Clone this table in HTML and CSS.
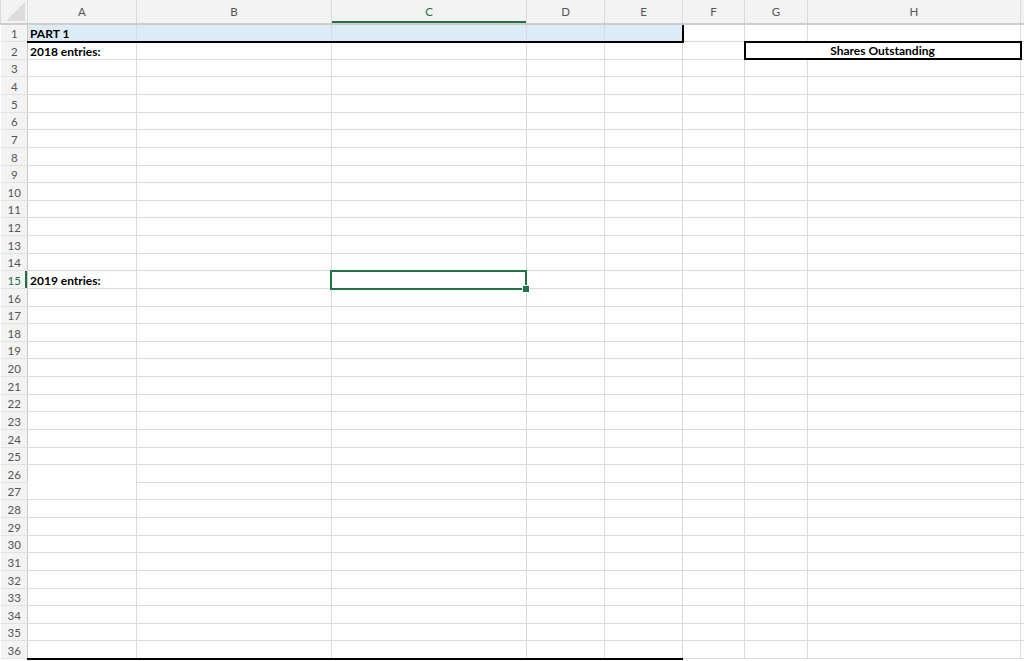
FILE: index.html
```html
<!DOCTYPE html>
<html lang="en">
<head>
  <meta charset="UTF-8" />
  <title>Sheet1</title>
  <link rel="stylesheet" href="styles.css">
</head>
<body>

  <table class="sheet">
    <colgroup>
      <col class="w-head">
      <col class="w-a">
      <col class="w-b">
      <col class="w-c">
      <col class="w-d">
      <col class="w-e">
      <col class="w-f">
      <col class="w-g">
      <col class="w-h">
      <col class="w-i">
    </colgroup>
    <thead>
      <tr>
        <th class="corner"><span class="corner-tri"></span></th>
        <th>A</th><th>B</th><th class="active">C</th><th>D</th><th>E</th><th>F</th><th>G</th><th>H</th><th></th>
      </tr>
    </thead>
    <tbody>
      <tr><th>1</th><td class="part">PART 1</td><td class="part"></td><td class="part"></td><td class="part"></td><td class="part part-end"></td><td></td><td></td><td></td><td></td></tr>
      <tr><th>2</th><td class="bold">2018 entries:</td><td></td><td></td><td></td><td></td><td></td><td class="boxed" colspan="2">Shares Outstanding</td><td></td></tr>
      <tr><th>3</th><td></td><td></td><td></td><td></td><td></td><td></td><td></td><td></td><td></td></tr>
      <tr><th>4</th><td></td><td></td><td></td><td></td><td></td><td></td><td></td><td></td><td></td></tr>
      <tr><th>5</th><td></td><td></td><td></td><td></td><td></td><td></td><td></td><td></td><td></td></tr>
      <tr><th>6</th><td></td><td></td><td></td><td></td><td></td><td></td><td></td><td></td><td></td></tr>
      <tr><th>7</th><td></td><td></td><td></td><td></td><td></td><td></td><td></td><td></td><td></td></tr>
      <tr><th>8</th><td></td><td></td><td></td><td></td><td></td><td></td><td></td><td></td><td></td></tr>
      <tr><th>9</th><td></td><td></td><td></td><td></td><td></td><td></td><td></td><td></td><td></td></tr>
      <tr><th>10</th><td></td><td></td><td></td><td></td><td></td><td></td><td></td><td></td><td></td></tr>
      <tr><th>11</th><td></td><td></td><td></td><td></td><td></td><td></td><td></td><td></td><td></td></tr>
      <tr><th>12</th><td></td><td></td><td></td><td></td><td></td><td></td><td></td><td></td><td></td></tr>
      <tr><th>13</th><td></td><td></td><td></td><td></td><td></td><td></td><td></td><td></td><td></td></tr>
      <tr><th>14</th><td></td><td></td><td></td><td></td><td></td><td></td><td></td><td></td><td></td></tr>
      <tr><th class="active">15</th><td class="bold">2019 entries:</td><td></td><td class="sel"><div class="sel-box"><span class="handle"></span></div></td><td></td><td></td><td></td><td></td><td></td><td></td></tr>
      <tr><th>16</th><td></td><td></td><td></td><td></td><td></td><td></td><td></td><td></td><td></td></tr>
      <tr><th>17</th><td></td><td></td><td></td><td></td><td></td><td></td><td></td><td></td><td></td></tr>
      <tr><th>18</th><td></td><td></td><td></td><td></td><td></td><td></td><td></td><td></td><td></td></tr>
      <tr><th>19</th><td></td><td></td><td></td><td></td><td></td><td></td><td></td><td></td><td></td></tr>
      <tr><th>20</th><td></td><td></td><td></td><td></td><td></td><td></td><td></td><td></td><td></td></tr>
      <tr><th>21</th><td></td><td></td><td></td><td></td><td></td><td></td><td></td><td></td><td></td></tr>
      <tr><th>22</th><td></td><td></td><td></td><td></td><td></td><td></td><td></td><td></td><td></td></tr>
      <tr><th>23</th><td></td><td></td><td></td><td></td><td></td><td></td><td></td><td></td><td></td></tr>
      <tr><th>24</th><td></td><td></td><td></td><td></td><td></td><td></td><td></td><td></td><td></td></tr>
      <tr><th>25</th><td></td><td></td><td></td><td></td><td></td><td></td><td></td><td></td><td></td></tr>
      <tr><th>26</th><td rowspan="2"></td><td></td><td></td><td></td><td></td><td></td><td></td><td></td><td></td></tr>
      <tr><th>27</th><td></td><td></td><td></td><td></td><td></td><td></td><td></td><td></td></tr>
      <tr><th>28</th><td></td><td></td><td></td><td></td><td></td><td></td><td></td><td></td><td></td></tr>
      <tr><th>29</th><td></td><td></td><td></td><td></td><td></td><td></td><td></td><td></td><td></td></tr>
      <tr><th>30</th><td></td><td></td><td></td><td></td><td></td><td></td><td></td><td></td><td></td></tr>
      <tr><th>31</th><td></td><td></td><td></td><td></td><td></td><td></td><td></td><td></td><td></td></tr>
      <tr><th>32</th><td></td><td></td><td></td><td></td><td></td><td></td><td></td><td></td><td></td></tr>
      <tr><th>33</th><td></td><td></td><td></td><td></td><td></td><td></td><td></td><td></td><td></td></tr>
      <tr><th>34</th><td></td><td></td><td></td><td></td><td></td><td></td><td></td><td></td><td></td></tr>
      <tr><th>35</th><td></td><td></td><td></td><td></td><td></td><td></td><td></td><td></td><td></td></tr>
      <tr class="last"><th>36</th><td></td><td></td><td></td><td></td><td></td><td></td><td></td><td></td><td></td></tr>
    </tbody>
  </table>

</body>
</html>
```

FILE: styles.css
```css
* { margin: 0; padding: 0; box-sizing: border-box; }

body {
  background: #fff;
  font-family: 'Lato', 'Liberation Sans', sans-serif;
  font-size: 12px;
  color: #000;
  overflow: hidden;
  width: 1024px;
  height: 661px;
}

.sheet {
  border-collapse: collapse;
  table-layout: fixed;
  width: 1024px;
}

.w-head { width: 27px; }
.w-a { width: 109px; }
.w-b { width: 195px; }
.w-c { width: 195px; }
.w-d { width: 78px; }
.w-e { width: 78px; }
.w-f { width: 62px; }
.w-g { width: 63px; }
.w-h { width: 213px; }
.w-i { width: 4px; }

thead tr { height: 24px; }
tbody tr { height: 17.64px; }

th {
  background: #f3f3f3;
  color: #555;
  font-weight: normal;
  font-size: 11.5px;
  border: 1px solid #dadada;
  border-top: none;
}

thead th {
  border-bottom: 2px solid #cdcdcd;
  text-align: center;
  vertical-align: middle;
}

tbody th {
  border-left: none;
  border-right: 1px solid #c8c8c8;
  border-bottom: 1px solid #e2e2e2;
  text-align: center;
  padding-left: 1px;
  line-height: 14px;
  vertical-align: bottom;
}

th.active {
  color: #217346;
}

thead th.active {
  box-shadow: inset 0 -2px 0 #217346;
}

tbody th.active {
  box-shadow: inset -2px 0 0 #217346;
}

.corner {
  position: relative;
}

.corner-tri {
  position: absolute;
  right: 2px;
  bottom: 2px;
  width: 0;
  height: 0;
  border-left: 19px solid transparent;
  border-bottom: 19px solid #dcdcdc;
}

td {
  border: 1px solid #dadada;
  padding: 0 2px;
  line-height: 14px;
  white-space: nowrap;
  overflow: hidden;
  vertical-align: bottom;
}

.bold {
  font-weight: bold;
}

.part {
  background: #ddebf7;
  border-bottom: 2px solid #000;
  font-weight: bold;
}

.part-end {
  border-right: 2px solid #000;
}

.boxed {
  border: 2px solid #000;
  font-weight: bold;
  text-align: center;
}

.last td:nth-of-type(-n+5) {
  border-bottom: 2px solid #000;
}

.sel {
  position: relative;
  overflow: visible;
}

.sel-box {
  position: absolute;
  top: -1px;
  left: -2px;
  right: -1px;
  bottom: -2px;
  border: 2px solid #217346;
}

.handle {
  position: absolute;
  right: -5px;
  bottom: -5px;
  width: 8px;
  height: 8px;
  background: #217346;
  border: 1px solid #fff;
}
```
